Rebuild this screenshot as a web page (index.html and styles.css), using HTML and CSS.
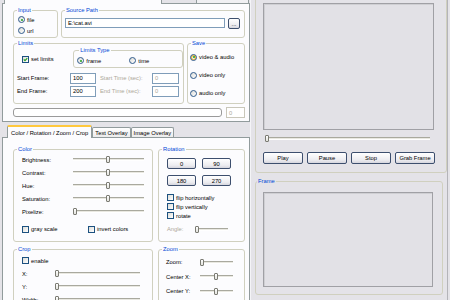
FILE: index.html
```html
<!DOCTYPE html>
<html lang="en">
<head>
    <meta charset="UTF-8">
    <title>Frame Grabber</title>
    <link rel="stylesheet" href="styles.css">
</head>
<body>
<div class="window">
    <div class="left">
        <div class="strip-top">
            <span class="stub stub-on"></span>
            <span class="stub stub-off"></span>
        </div>
        <div class="page page-top">
            <div class="row row-source">
                <fieldset class="group g-input">
                    <legend>Input</legend>
                    <div class="inner">
                        <label class="opt"><span class="radio on"></span>file</label>
                        <label class="opt"><span class="radio"></span>url</label>
                    </div>
                </fieldset>
                <fieldset class="group g-path">
                    <legend>Source Path</legend>
                    <div class="inner path-row">
                        <span class="field path">E:\cat.avi</span>
                        <span class="btn browse">...</span>
                    </div>
                </fieldset>
            </div>

            <div class="row row-limits">
                <fieldset class="group g-limits">
                    <legend>Limits</legend>
                    <div class="inner">
                        <div class="limits-head">
                            <label class="opt set-limits"><span class="check on"><svg viewBox="0 0 5 5"><polyline points="0.8,2.4 2,3.7 4.3,1.1"/></svg></span>set limits</label>
                            <fieldset class="group g-type">
                                <legend>Limits Type</legend>
                                <div class="inner type-row">
                                    <label class="opt frame-opt"><span class="radio on"></span>frame</label>
                                    <label class="opt"><span class="radio"></span>time</label>
                                </div>
                            </fieldset>
                        </div>
                        <div class="range-grid">
                            <span>Start Frame:</span>
                            <span class="field">100</span>
                            <span class="off sec">Start Time (sec):</span>
                            <span class="field off">0</span>
                            <span>End Frame:</span>
                            <span class="field">200</span>
                            <span class="off sec">End Time (sec):</span>
                            <span class="field off">0</span>
                        </div>
                    </div>
                </fieldset>
                <fieldset class="group g-save">
                    <legend>Save</legend>
                    <div class="inner save-list">
                        <label class="opt"><span class="radio on hot"></span>video &amp; audio</label>
                        <label class="opt"><span class="radio"></span>video only</label>
                        <label class="opt"><span class="radio"></span>audio only</label>
                    </div>
                </fieldset>
            </div>

            <div class="row row-progress">
                <div class="progress"></div>
                <span class="field off count">0</span>
            </div>
        </div>

        <div class="strip-tabs">
            <span class="tab on">Color / Rotation / Zoom / Crop</span>
            <span class="tab">Text Overlay</span>
            <span class="tab">Image Overlay</span>
        </div>
        <div class="page page-bottom">
            <div class="row row-color">
                <fieldset class="group g-color">
                    <legend>Color</legend>
                    <div class="inner">
                        <div class="srow"><span>Brightness:</span><div class="slider"><span class="knob mid"></span></div></div>
                        <div class="srow"><span>Contrast:</span><div class="slider"><span class="knob mid"></span></div></div>
                        <div class="srow"><span>Hue:</span><div class="slider"><span class="knob mid"></span></div></div>
                        <div class="srow"><span>Saturation:</span><div class="slider"><span class="knob mid"></span></div></div>
                        <div class="srow"><span>Pixelize:</span><div class="slider"><span class="knob min"></span></div></div>
                        <div class="color-checks">
                            <label class="opt gray-opt"><span class="check"></span>gray scale</label>
                            <label class="opt"><span class="check"></span>invert colors</label>
                        </div>
                    </div>
                </fieldset>
                <fieldset class="group g-rotation">
                    <legend>Rotation</legend>
                    <div class="inner">
                        <div class="rot-grid">
                            <span class="btn">0</span>
                            <span class="btn">90</span>
                            <span class="btn">180</span>
                            <span class="btn">270</span>
                        </div>
                        <div class="rot-checks">
                            <label class="opt"><span class="check"></span>flip horizontally</label>
                            <label class="opt"><span class="check"></span>flip vertically</label>
                            <label class="opt"><span class="check"></span>rotate</label>
                        </div>
                        <div class="angle-row">
                            <span class="off">Angle:</span>
                            <div class="slider"><span class="knob min"></span></div>
                        </div>
                    </div>
                </fieldset>
            </div>

            <div class="row row-crop">
                <fieldset class="group g-crop">
                    <legend>Crop</legend>
                    <div class="inner">
                        <label class="opt crop-enable"><span class="check"></span>enable</label>
                        <div class="crow"><span>X:</span><div class="slider"><span class="knob min"></span></div></div>
                        <div class="crow"><span>Y:</span><div class="slider"><span class="knob min"></span></div></div>
                        <div class="crow"><span>Width:</span><div class="slider"><span class="knob min"></span></div></div>
                    </div>
                </fieldset>
                <fieldset class="group g-zoom">
                    <legend>Zoom</legend>
                    <div class="inner">
                        <div class="zrow"><span>Zoom:</span><div class="slider"><span class="knob min"></span></div></div>
                        <div class="zrow"><span>Center X:</span><div class="slider"><span class="knob mid"></span></div></div>
                        <div class="zrow"><span>Center Y:</span><div class="slider"><span class="knob mid"></span></div></div>
                    </div>
                </fieldset>
            </div>
        </div>
    </div>

    <div class="right">
        <div class="video-group">
            <div class="screen video"></div>
            <div class="slider seek"><span class="knob min"></span></div>
            <div class="player">
                <span class="btn">Play</span>
                <span class="btn">Pause</span>
                <span class="btn">Stop</span>
                <span class="btn">Grab Frame</span>
            </div>
        </div>
        <fieldset class="group g-frame">
            <legend>Frame</legend>
            <div class="inner">
                <div class="screen frame"></div>
            </div>
        </fieldset>
    </div>
</div>
</body>
</html>
```

FILE: styles.css
```css
* {
    box-sizing: border-box;
}
body {
    margin: 0;
    background-color: #e4e3e8;
    font-family: "Liberation Sans", Arial, sans-serif;
    font-size: 5.8px;
    color: #000;
    overflow: hidden;
}
.window {
    display: flex;
    width: 450px;
    height: 300px;
    overflow: hidden;
}

/* left side: two tab pages */
.left {
    width: 250px;
    padding-left: 2px;
}
.strip-top {
    display: flex;
    height: 3px;
}
.stub {
    display: block;
    height: 3px;
    border-left: 1px solid #919b9c;
    border-right: 1px solid #919b9c;
}
.stub-on {
    position: relative;
    z-index: 1;
    height: 4px;
    width: 158px;
    margin-left: 2px;
    background-color: #fcfcfe;
}
.stub-off {
    width: 53px;
    margin-left: 34px;
    background-color: #f0f0f3;
}
.page {
    border: 1px solid #919b9c;
    background-color: #fcfcfe;
    padding: 3px 4px 0 10px;
}
.page-top {
    height: 119px;
}
.page-bottom {
    height: 163px;
    padding-top: 8px;
    border-bottom: none;
    overflow: hidden;
}
.row {
    display: flex;
}
.row-source {
    height: 31px;
    gap: 3px;
}
.row-limits {
    height: 64px;
    margin-top: 2px;
    gap: 3px;
}
.row-progress {
    height: 11px;
    margin-top: 3px;
    gap: 4px;
    align-items: center;
}

/* group boxes */
.group {
    margin: 0;
    padding: 0;
    min-width: 0;
    border: 1px solid #d0d0bf;
    border-radius: 3px;
}
.group legend {
    padding: 0 1px;
    margin-left: 3px;
    line-height: 7px;
    color: #0046d5;
}
.opt {
    display: flex;
    align-items: center;
    gap: 2px;
    white-space: nowrap;
}
.off {
    color: #aca899;
}

.g-input {
    width: 45px;
}
.g-input .inner {
    padding-left: 4px;
}
.g-input .opt {
    height: 11px;
}
.g-path {
    flex: 1;
}
.path-row {
    display: flex;
    gap: 3px;
    padding: 4px 4px 0 3px;
}
.path {
    flex: 1;
    height: 10px;
}
.browse {
    width: 12px;
    height: 11px;
}

.g-limits {
    width: 171px;
}
.g-limits .inner {
    padding-left: 3px;
}
.limits-head {
    display: flex;
    height: 21px;
}
.set-limits {
    width: 52px;
    height: 8px;
    margin: 8px 0 0 5px;
}
.g-type {
    width: 111px;
}
.g-type legend {
    margin-left: 5px;
}
.type-row {
    display: flex;
    align-items: center;
    height: 13px;
    padding-left: 4px;
}
.frame-opt {
    width: 52px;
}
.range-grid {
    display: grid;
    grid-template-columns: 53px 26px 56px 27px;
    grid-auto-rows: 12px;
    row-gap: 1px;
    align-items: center;
    margin-top: 4px;
}
.range-grid .field {
    height: 11px;
}
.sec {
    padding-left: 4px;
}

.g-save {
    flex: 1;
}
.save-list {
    padding: 1px 0 0 2px;
}
.save-list .opt {
    height: 18px;
}

.field {
    display: flex;
    align-items: center;
    padding: 0 2px;
    border: 1px solid #7f9db9;
    background-color: #fff;
}
.progress {
    flex: 1;
    height: 9px;
    border: 1px solid #9a9a9a;
    border-radius: 3px;
    background-color: #fff;
}
.count {
    width: 19px;
    height: 11px;
    border-color: #c9c7ba;
}

/* radios, checks, buttons */
.radio {
    position: relative;
    flex: none;
    width: 7px;
    height: 7px;
    border: 1px solid #2f5a8a;
    border-radius: 50%;
    background: linear-gradient(135deg, #dcdcd7, #fff);
}
.radio.on::after {
    content: "";
    position: absolute;
    left: 1.5px;
    top: 1.5px;
    width: 2px;
    height: 2px;
    border-radius: 50%;
    background-color: #21a121;
}
.radio.hot {
    box-shadow: inset 0 0 0 1px #f8b636;
}
.check {
    display: flex;
    flex: none;
    width: 7px;
    height: 7px;
    border: 1px solid #1c5180;
    background: linear-gradient(135deg, #dcdcd7, #fff);
}
.check svg {
    width: 5px;
    height: 5px;
}
.check polyline {
    fill: none;
    stroke: #21a121;
    stroke-width: 1.1;
}
.btn {
    display: flex;
    align-items: center;
    justify-content: center;
    border: 1px solid #3d4f6e;
    border-radius: 2px;
    background: linear-gradient(#fff, #ececf0 70%, #d6d6de);
    white-space: nowrap;
}

/* tabs */
.strip-tabs {
    display: flex;
    align-items: flex-end;
    height: 12px;
    margin-top: 3px;
    padding-left: 5px;
}
.tab {
    display: flex;
    align-items: center;
    height: 10px;
    padding: 0 2px;
    border: 1px solid #919b9c;
    border-bottom: none;
    border-radius: 2px 2px 0 0;
    background: linear-gradient(#fff, #ececec);
    white-space: nowrap;
}
.tab.on {
    position: relative;
    z-index: 1;
    height: 13px;
    margin-bottom: -1px;
    padding: 0 3px;
    border-top: 2px solid #ffc83c;
    background: #fcfcfe;
}

/* sliders */
.slider {
    position: relative;
    height: 3px;
    border-top: 1px solid #a9a99e;
    border-bottom: 1px solid #fff;
    background-color: #e9e8e1;
}
.knob {
    position: absolute;
    top: -3px;
    width: 4px;
    height: 7px;
    margin-left: -2px;
    border: 1px solid #7b7b73;
    border-radius: 1px;
    background: linear-gradient(#fff, #e2e2dc);
}
.knob.mid {
    left: 49%;
}
.knob.min {
    left: 2px;
}

/* bottom page */
.row-color {
    height: 96px;
    gap: 5px;
}
.row-crop {
    height: 80px;
    margin-top: 4px;
    gap: 5px;
}
.g-color,
.g-crop {
    width: 140px;
}
.g-rotation,
.g-zoom {
    flex: 1;
}
.g-color .inner {
    padding-left: 8px;
}
.srow {
    display: grid;
    grid-template-columns: 51px 71px;
    align-items: center;
    height: 13px;
}
.color-checks {
    display: flex;
    align-items: center;
    height: 14px;
    margin-top: 4px;
}
.gray-opt {
    width: 66px;
}
.g-rotation .inner {
    padding: 5px 0 0 8px;
}
.rot-grid {
    display: grid;
    grid-template-columns: 29px 29px;
    grid-auto-rows: 11px;
    gap: 6px;
}
.rot-checks {
    margin-top: 7px;
}
.rot-checks .opt {
    height: 9px;
}
.angle-row {
    display: grid;
    grid-template-columns: 28px 33px;
    align-items: center;
    height: 10px;
    margin-top: 4px;
}
.g-crop .inner {
    padding: 1px 0 0 8px;
}
.crop-enable {
    height: 13px;
}
.crow {
    display: grid;
    grid-template-columns: 33px 85px;
    align-items: center;
    height: 13px;
}
.g-zoom .inner {
    padding: 2px 0 0 7px;
}
.zrow {
    display: grid;
    grid-template-columns: 34px 33px;
    align-items: center;
    height: 14.5px;
}

/* right side: player and frame */
.right {
    width: 198px;
    padding-left: 4px;
    border-left: 1px solid #f4f4f7;
    border-right: 1px solid #b4b4b9;
}
.video-group {
    height: 178px;
    margin-top: -5px;
    padding: 7px 0 0 7px;
    border: 1px solid #d0d0bf;
    border-radius: 3px;
}
.screen {
    border: 1px solid #a0a0a5;
    background-color: #e2e1e6;
    box-shadow: inset 1px 1px 0 #cfcfd3;
}
.video {
    width: 171px;
    height: 127px;
}
.seek {
    width: 165px;
    margin: 7px 0 0 2px;
}
.player {
    display: flex;
    gap: 4px;
    margin-top: 12px;
}
.player .btn {
    width: 40px;
    height: 12px;
}
.g-frame {
    width: 188px;
    height: 117px;
    margin-top: 5px;
}
.g-frame legend {
    margin-left: 1px;
}
.g-frame .inner {
    padding: 7px 0 0 7px;
}
.frame {
    width: 170px;
    height: 95px;
}
```
